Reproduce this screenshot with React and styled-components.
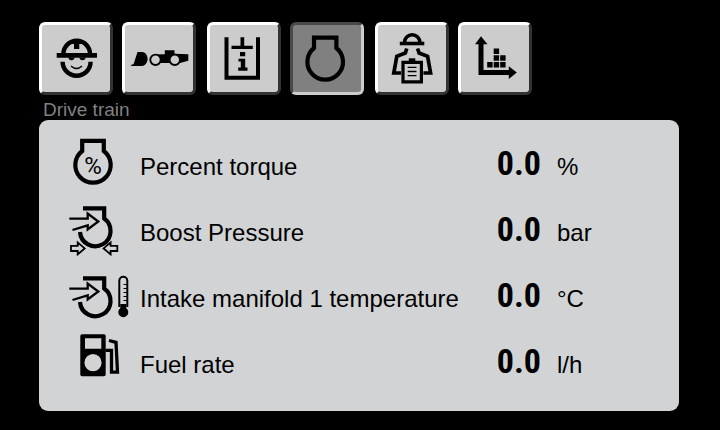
import React, { useState } from "react";
import styled, { createGlobalStyle } from "styled-components";

const GlobalStyle = createGlobalStyle`
  body {
    margin: 0;
    background: #000;
    font-family: "Liberation Sans", Arial, sans-serif;
  }
`;

const Screen = styled.main`
  box-sizing: border-box;
  min-height: 100vh;
  padding: 22px 41px 19px 39px;
  background: #000;
`;

const Toolbar = styled.nav`
  display: flex;
  gap: 11px;
`;

const ButtonPair = styled.div`
  display: flex;
  gap: 9px;
`;

const TabButton = styled.button`
  display: flex;
  align-items: center;
  justify-content: center;
  box-sizing: border-box;
  width: 74px;
  height: 73px;
  padding: 0;
  border: 3px solid;
  border-color: ${({ $active }) =>
    $active ? "#4a4a4a #cccccc #cccccc #4a4a4a" : "#ffffff #333333 #333333 #ffffff"};
  border-radius: 6px;
  background: ${({ $active }) => ($active ? "#808080" : "#cccccc")};
  color: #000;
  cursor: pointer;
`;

const TabIcon = styled.svg`
  flex: none;
  width: 60px;
  height: 60px;
`;

const Caption = styled.h1`
  margin: 5px 0 0 4px;
  font-size: 19px;
  font-weight: 400;
  line-height: 20px;
  color: #808080;
`;

const Panel = styled.section`
  padding: 12px 27px 15px;
  border-radius: 9px;
  background: #d2d3d5;
`;

const Row = styled.div`
  display: grid;
  grid-template-columns: 74px minmax(0, 1fr) 46px 111px;
  align-items: center;
  height: 66px;
  color: #000;
`;

const RowIcon = styled.svg`
  width: 66px;
  height: 60px;
`;

const Label = styled.span`
  padding-top: 4px;
  font-size: 24px;
  line-height: 28px;
  white-space: nowrap;
`;

const Value = styled.output`
  padding-bottom: 4px;
  font-family: "Roboto Condensed", sans-serif;
  font-size: 34px;
  font-weight: 700;
  line-height: 40px;
  text-align: right;
`;

const Unit = styled.span`
  padding: 4px 0 0 16px;
  font-size: 24px;
  line-height: 28px;
`;

const stroke = { fill: "none", stroke: "currentColor" };

const OperatorIcon = () => (
  <TabIcon viewBox="0 0 60 60" aria-hidden="true">
    <path d="M17.4 25A13.3 13.3 0 0 1 44 25" {...stroke} strokeWidth="4.4" />
    <path d="M25 12h11.500v3h-3.200v5H28v-5h-3zM10.700 24H51v4.800H10.700z" />
    <path d="M22.500 28.500h6a3 2.800 0 0 1-6 0zM33.500 28.500h6a3 2.800 0 0 1-6 0z" />
    <path d="M16.600 32.700a14 14 0 0 0 28 0" {...stroke} strokeWidth="4.400" />
    <path d="M25 37q5.500 5 11 0" {...stroke} strokeWidth="1.500" />
  </TabIcon>
);

const LoaderIcon = () => (
  <TabIcon viewBox="0 0 60 60" aria-hidden="true">
    <path d="M2.200 37v-1.200L4.500 35.300 8.500 23H13c4 .3 5.800 4 5.600 7.500C18.300 34 16 37 13 37z" />
    <path d="M24 25.500 35.800 25.300V21.300H45.500V24.700L59.300 25.300V31.800L51 34H31z" />
    <circle cx="26.500" cy="30.800" r="5.200" fill="#ccc" stroke="currentColor" strokeWidth="1.900" />
    <circle cx="45.800" cy="30.800" r="5.200" fill="#ccc" stroke="currentColor" strokeWidth="1.900" />
  </TabIcon>
);

const FluidInfoIcon = () => (
  <TabIcon viewBox="0 0 60 60" aria-hidden="true">
    <path d="M12.500 8.300V48.700H44V8.300" {...stroke} strokeWidth="4" />
    <path d="M26.500 8.300h3.700v8.400h8.600v3.200H17.500v-3.200h9z" />
    <path d="M26 23h5.200v4.300H26zM24.500 29.800h6.700v8.700h2.300v3.200h-9.300v-3.200h2.600v-6h-2.300z" />
  </TabIcon>
);

const EngineIcon = () => (
  <TabIcon viewBox="0 0 60 60" aria-hidden="true">
    <path d="M17 19V8.700H39.400V19A17.800 17.800 0 1 1 17 19z" {...stroke} strokeWidth="4.200" />
  </TabIcon>
);

const ServiceIcon = () => (
  <TabIcon viewBox="0 0 60 60" aria-hidden="true">
    <path d="M22.500 13.500a7.700 7.700 0 0 1 15.400 0" {...stroke} strokeWidth="3.600" />
    <path d="M17.800 12.700h24.500v3.600H17.800z" />
    <path d="M24.800 19.500 23.300 24 14.800 27.300 11.800 44H19M35.600 19.500 37.100 24 45.600 27.300 48.600 44H41.400" {...stroke} strokeWidth="3.700" />
    <path d="M21 33.300h18.400v19.500H21z" {...stroke} strokeWidth="3.200" />
    <path d="M26.800 29.300h6.500v3.500h-6.500z" />
    <path d="M25.700 38.300h8.800M25.700 42.500h8.800M25.700 46.700h8.800" {...stroke} strokeWidth="1.300" />
  </TabIcon>
);

const ChartIcon = () => (
  <TabIcon viewBox="0 0 60 60" aria-hidden="true">
    <path d="M16 7.300 22.500 15.300H18.500V41H43.800V37.300L51.800 43.600 43.800 50V46H13.500V15.300H10z" />
    <path d="M22.200 33h5.400v5.400h-5.400zM28.700 33h5.400v5.400h-5.400zM35.200 33h5.400v5.400h-5.400zM28.700 26.300h5.400v5.400h-5.400zM35.200 26.300h5.400v5.400h-5.400zM28.700 19.600h5.400V25h-5.400z" />
  </TabIcon>
);

const Percent = styled.text`
  font-family: Roboto, sans-serif;
  font-size: 24px;
  text-anchor: middle;
`;

const TorqueIcon = () => (
  <RowIcon viewBox="0 0 66 60" aria-hidden="true">
    <path d="M16.200 16V5.800H37.800V16A17.700 17.700 0 1 1 16.200 16z" {...stroke} strokeWidth="4.200" />
    <Percent x="27" y="39">%</Percent>
  </RowIcon>
);

const Intake = () => (
  <>
    <path d="M17 7.300H38.200V17.500A15.300 15.300 0 1 1 14 31" {...stroke} strokeWidth="4.200" />
    <path d="M3.300 17.700H21.700V12.500L32.300 20.500 21.700 28.500V24.300L6.500 29" {...stroke} strokeWidth="2.300" />
  </>
);

const BoostIcon = () => (
  <RowIcon viewBox="0 0 66 60" aria-hidden="true">
    <Intake />
    <path
      d="M5 44.800h6.700v-3.400l7 6-7 6V50H5zM51.300 44.800h-6.700v-3.400l-7 6 7 6V50h6.700z"
      {...stroke}
      strokeWidth="1.800"
    />
  </RowIcon>
);

const ManifoldIcon = () => (
  <RowIcon viewBox="0 0 66 60" aria-hidden="true">
    <g transform="translate(0 4)">
      <Intake />
    </g>
    <path d="M53.300 40V13.800a4 4 0 0 1 8 0V40" {...stroke} strokeWidth="2" />
    <path d="M57.500 17.500h3.500M57.500 21.500h3.500M57.500 25.500h3.500M57.500 29.500h3.500M57.500 33.500h3.500" {...stroke} strokeWidth="1" />
    <path d="M54.300 37h6v4.200a5 5 0 1 1-6 0z" />
  </RowIcon>
);

const FuelIcon = () => (
  <RowIcon viewBox="0 0 66 60" aria-hidden="true">
    <path
      fillRule="evenodd"
      d="M16 1.200H38a1.700 1.700 0 0 1 1.700 1.700V41.600a1.700 1.700 0 0 1-1.700 1.700H16a1.700 1.700 0 0 1-1.700-1.700V2.900A1.700 1.700 0 0 1 16 1.200zM19 5.300V15.700H35.300V5.300zM18.400 29.700a8.600 8.600 0 1 0 17.200 0a8.600 8.600 0 1 0-17.200 0z"
    />
    <path d="M39.500 17.300H45.500V39.200H51.500L50 9.300 43 7.500" {...stroke} strokeWidth="3.300" />
  </RowIcon>
);

const tabPairs = [
  [
    { name: "Operator", Icon: OperatorIcon },
    { name: "Machine", Icon: LoaderIcon },
  ],
  [
    { name: "Fluid information", Icon: FluidInfoIcon },
    { name: "Drive train", Icon: EngineIcon },
  ],
  [
    { name: "Service", Icon: ServiceIcon },
    { name: "Statistics", Icon: ChartIcon },
  ],
];

const readings = [
  { id: "torque", label: "Percent torque", value: "0.0", unit: "%", Icon: TorqueIcon },
  { id: "boost", label: "Boost Pressure", value: "0.0", unit: "bar", Icon: BoostIcon },
  { id: "intake", label: "Intake manifold 1 temperature", value: "0.0", unit: "°C", Icon: ManifoldIcon },
  { id: "fuel", label: "Fuel rate", value: "0.0", unit: "l/h", Icon: FuelIcon },
];

export default function App() {
  const [active, setActive] = useState("Drive train");
  return (
    <>
      <GlobalStyle />
      <Screen>
        <Toolbar>
          {tabPairs.map((pair) => (
            <ButtonPair key={pair[0].name}>
              {pair.map(({ name, Icon }) => (
                <TabButton
                  key={name}
                  type="button"
                  aria-label={name}
                  aria-pressed={active === name}
                  $active={active === name}
                  onClick={() => setActive(name)}
                >
                  <Icon />
                </TabButton>
              ))}
            </ButtonPair>
          ))}
        </Toolbar>
        <Caption>{active}</Caption>
        <Panel>
          {readings.map(({ id, label, value, unit, Icon }) => (
            <Row key={id}>
              <Icon />
              <Label id={id}>{label}</Label>
              <Value aria-labelledby={id}>{value}</Value>
              <Unit>{unit}</Unit>
            </Row>
          ))}
        </Panel>
      </Screen>
    </>
  );
}
